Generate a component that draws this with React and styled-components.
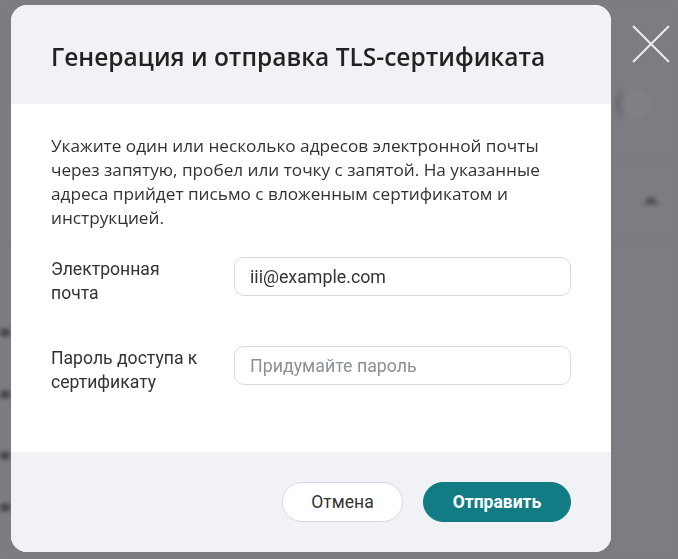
import React from 'react'
import styled, { createGlobalStyle } from 'styled-components'

const GlobalStyle = createGlobalStyle`
    * {
        box-sizing: border-box;
    }
    html, body {
        margin: 0;
        padding: 0;
        height: 100%;
        overflow: hidden;
    }
    body {
        font-family: "Open Sans", "Noto Sans", sans-serif;
        background: #f4f5f7;
    }
`

// blurred page behind the dialog
const BgPage = styled.div`
    position: fixed;
    inset: 0;
    display: flex;
    flex-direction: column;
    background: #f4f5f7;
    filter: blur(2.5px);
`

const BgRow = styled.div`
    height: ${props => props.h}px;
    flex-shrink: 0;
    display: flex;
    align-items: center;
    justify-content: space-between;
    padding: 0 ${props => props.pr || 0}px 0 0;
    border-bottom: ${props => props.line ? '1px solid #d9dbdf' : 'none'};
`

const BgBlob = styled.div`
    width: ${props => props.w}px;
    height: 7px;
    background: #666;
    border-radius: 3px;
`

const BgPill = styled.div`
    width: 34px;
    height: 28px;
    border-radius: 14px;
    background: #fff;
    border-left: 4px solid #aaa;
    filter: blur(2px);
`

const Overlay = styled.div`
    position: fixed;
    inset: 0;
    background: rgba(24, 25, 31, 0.55);
    display: flex;
    align-items: flex-start;
    padding: 5px 0 0 11px;
`

const Modal = styled.div`
    width: 600px;
    border-radius: 16px;
    overflow: hidden;
    background: #fff;
    display: flex;
    flex-direction: column;
`

const Header = styled.div`
    height: 99px;
    background: #f1f2f6;
    display: flex;
    align-items: center;
    padding: 0 40px;
`

const Title = styled.h2`
    margin: 0;
    font-family: "Open Sans", sans-serif;
    font-size: 24.5px;
    font-weight: 600;
    color: #222;
    padding-top: 3px;
`

const Body = styled.div`
    padding: 30px 40px 58px;
`

const Intro = styled.p`
    margin: 0 0 27px;
    font-size: 17.2px;
    line-height: 24px;
    color: #333;
`

const Form = styled.div`
    display: flex;
    flex-direction: column;
    gap: 41px;
`

const Row = styled.label`
    display: grid;
    grid-template-columns: 183px 1fr;
    align-items: start;
`

const Label = styled.span`
    width: 152px;
    font-family: Roboto, sans-serif;
    font-size: 17.6px;
    line-height: 24px;
    color: #333;
`

const Input = styled.input`
    height: 39px;
    width: 100%;
    border: 1px solid #d6dae0;
    border-radius: 10px;
    padding: 0 15px;
    font-family: Roboto, sans-serif;
    font-size: 17.8px;
    color: #333;
    background: #fff;
    outline: none;
    &::placeholder {
        color: #8c9097;
    }
`

const Footer = styled.div`
    background: #f1f2f6;
    display: flex;
    justify-content: flex-end;
    gap: 20px;
    padding: 30px 40px;
`

const Button = styled.button`
    height: 40px;
    min-width: ${props => props.primary ? 148 : 121}px;
    border-radius: 20px;
    font-family: Roboto, sans-serif;
    font-size: 17.5px;
    font-weight: ${props => props.primary ? 700 : 400};
    color: ${props => props.primary ? '#fff' : '#333'};
    background: ${props => props.primary ? '#127c85' : '#fff'};
    border: 1px solid ${props => props.primary ? '#127c85' : '#d6dae0'};
    cursor: pointer;
`

const Close = styled.button`
    margin: 20px 0 0 21px;
    width: 38px;
    height: 38px;
    padding: 0;
    border: none;
    background: none;
    cursor: pointer;
`

export default function App() {
    return (
        <>
            <GlobalStyle />
            <BgPage>
                <BgRow h={88} />
                <BgRow h={32} pr={28}>
                    <span />
                    <BgPill />
                </BgRow>
                <BgRow h={40} line />
                <BgRow h={82} pr={20} line>
                    <span />
                    <svg width="14" height="10" viewBox="0 0 14 10">
                        <path d="M2 8L7 3L12 8" stroke="#333" strokeWidth="2.5" fill="none" />
                    </svg>
                </BgRow>
                <BgRow h={59} />
                <BgRow h={62}>
                    <BgBlob w={10} />
                </BgRow>
                <BgRow h={62}>
                    <BgBlob w={10} />
                </BgRow>
                <BgRow h={60}>
                    <BgBlob w={10} />
                </BgRow>
                <BgRow h={44}>
                    <BgBlob w={10} />
                </BgRow>
            </BgPage>
            <Overlay>
                <Modal>
                    <Header>
                        <Title>Генерация и отправка TLS-сертификата</Title>
                    </Header>
                    <Body>
                        <Intro>
                            Укажите один или несколько адресов электронной почты через запятую, пробел или точку с запятой. На указанные адреса прийдет письмо с вложенным сертификатом и инструкцией.
                        </Intro>
                        <Form>
                            <Row>
                                <Label>Электронная почта</Label>
                                <Input defaultValue="iii@example.com" />
                            </Row>
                            <Row>
                                <Label>Пароль доступа к сертификату</Label>
                                <Input type="password" placeholder="Придумайте пароль" />
                            </Row>
                        </Form>
                    </Body>
                    <Footer>
                        <Button>Отмена</Button>
                        <Button primary>Отправить</Button>
                    </Footer>
                </Modal>
                <Close aria-label="Закрыть">
                    <svg width="38" height="38" viewBox="0 0 38 38">
                        <path d="M1 1L37 37M37 1L1 37" stroke="#ececec" strokeWidth="2" />
                    </svg>
                </Close>
            </Overlay>
        </>
    )
}
